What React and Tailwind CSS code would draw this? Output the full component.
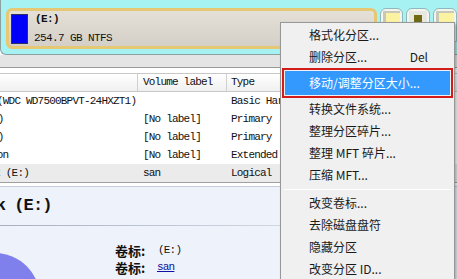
import React from 'react';

const mono = { fontFamily: '"Liberation Mono", "DejaVu Sans Mono", monospace' };
const cjk = { fontFamily: '"Noto Sans CJK SC", "Noto Sans", sans-serif' };

const rows = [
    { name: '(WDC WD7500BPVT-24HXZT1)', label: '', type: 'Basic Hard Disk', indent: '-ml-[3px]' },
    { name: 'Primary (C:)', label: '[No label]', type: 'Primary', indent: '-ml-[66px]' },
    { name: 'Primary (D:)', label: '[No label]', type: 'Primary', indent: '-ml-[66px]' },
    { name: 'Extended Partition', label: '[No label]', type: 'Extended', indent: '-ml-[96px]' },
    { name: 'Local Disk (E:)', label: 'san', type: 'Logical', indent: '-ml-[58px]', selected: true },
];

const menu = [
    { text: '格式化分区...' },
    { text: '删除分区...', key: 'Del' },
    { text: '移动/调整分区大小...', active: true },
    { text: '转换文件系统...' },
    { text: '整理分区碎片...' },
    { text: '整理 MFT 碎片...' },
    { text: '压缩 MFT...' },
    { sep: true },
    { text: '改变卷标...' },
    { text: '去除磁盘盘符' },
    { text: '隐藏分区' },
    { text: '改变分区 ID...' },
];

function MiniBox({ children }) {
    return (
        <div className="w-[24px] h-[34px] rounded-t-[6px] border border-[#8fb8b8] bg-[#f4f4f0] p-[2px] flex flex-col">
            {children}
        </div>
    );
}

export default function App() {
    return (
        <div className="relative w-[457px] h-[279px] overflow-hidden bg-white text-[#111]" style={mono}>
            {/* disk map strip */}
            <div className="h-[55px] bg-[#a6f1f1] border-b border-l border-[#8ca0a0] rounded-bl-[6px] flex items-start gap-[3px] pl-[5px] pt-[8px]">
                <div className="w-[374px] h-[41px] rounded-[6px] border-[3px] border-[#e6c773] bg-gradient-to-b from-[#e4e0d8] to-[#d4d0c8] flex items-center gap-[6px] pl-[2px]">
                    <div className="w-[17px] h-[30px] bg-[#0000f8] border border-[#303060]" />
                    <div className="flex flex-col leading-none text-[11px] tracking-[-0.6px] gap-[8px]">
                        <span className="font-bold pl-[1px]">(E:)</span>
                        <span>254.7 GB NTFS</span>
                    </div>
                </div>
                <MiniBox>
                    <div className="flex-1 bg-[#fbf3a2] border-l-[3px] border-t-[2px] border-[#c8c8b8]" />
                </MiniBox>
                <MiniBox>
                    <div className="flex-1 bg-[#e8e8e0] flex justify-center pt-[4px]">
                        <div className="w-[8px] h-[8px] bg-[#6f6a12]" />
                    </div>
                </MiniBox>
                <MiniBox>
                    <div className="flex-1 bg-[#fbf3a2] border-l-[3px] border-t-[2px] border-[#c8c8b8]" />
                </MiniBox>
            </div>
            <div className="h-[13px] bg-[#e4e4e4] border-b border-[#9a9a9a]" />
            <div className="h-[5px]" />

            {/* table header */}
            <div className="h-[19px] flex border-y border-[#c8c8c8] bg-gradient-to-b from-white to-[#f0f0f0] text-[11px] tracking-[-0.8px] items-center">
                <div className="w-[138px] h-full border-r border-[#d0d0d0]" />
                <div className="w-[89px] h-full border-r border-[#d0d0d0] flex items-center pl-[5px]">Volume label</div>
                <div className="flex-1 pl-[4px]">Type</div>
            </div>

            {/* table rows */}
            <div className="flex flex-col">
                {rows.map((r, i) => (
                    <div key={i} className={`h-[18px] flex items-center text-[11px] tracking-[-0.8px] whitespace-nowrap ${r.selected ? 'bg-[#ebebeb]' : ''}`}>
                        <div className="w-[138px] overflow-hidden">
                            <span className={`block ${r.indent}`}>{r.name}</span>
                        </div>
                        <div className="w-[89px] pl-[5px]">{r.label}</div>
                        <div className="flex-1 pl-[4px]">{r.type}</div>
                    </div>
                ))}
            </div>
            <div className="h-[4px] border-t border-[#a0a0a0]" />

            {/* properties panel */}
            <div className="relative h-[100px] bg-[#eef2fa] border-t border-[#c4ccd8] overflow-hidden">
                <div className="h-[38px] flex items-center overflow-hidden whitespace-nowrap">
                    <span className="-ml-[88px] font-bold text-[17px] tracking-[-0.9px]">Local Disk (E:)</span>
                </div>
                <div className="h-px bg-gradient-to-r from-[#a8b0c0] via-[#c8d0dc] to-[#eef2fa]" />
                <div className="absolute -left-[50px] top-[66px] w-[90px] h-[90px] rounded-full bg-[#8080ec]" />
                <div className="pl-[115px] pt-[16px] flex flex-col text-[12px]">
                    <div className="h-[17px] flex items-center">
                        <span className="font-bold w-[43px] text-[13px] leading-[17px]" style={cjk}>卷标:</span>
                        <span className="tracking-[-0.8px] text-[11px] leading-[17px]">(E:)</span>
                    </div>
                    <div className="h-[17px] flex items-center">
                        <span className="font-bold w-[42px] text-[13px] leading-[17px]" style={cjk}>卷标:</span>
                        <span className="tracking-[-0.8px] text-[11px] leading-[17px] text-[#1010a0] underline">san</span>
                    </div>
                </div>
            </div>

            {/* context menu */}
            <div className="absolute left-[280px] top-[22px] w-[175px] h-[270px] bg-[#f0f0f0] border border-[#979797] shadow-[2px_2px_3px_rgba(0,0,0,0.3)] pt-[1px] px-[1px] text-[12px] text-[#1a1a1a]" style={cjk}>
                {menu.map((m, i) =>
                    m.sep ? (
                        <div key={i} className="h-[6px] flex items-center px-[2px]">
                            <div className="h-px w-full bg-[#c4c4c4] border-b border-white" />
                        </div>
                    ) : m.active ? (
                        <div key={i} className="h-[30px] border-2 border-[#d21c1c] p-px">
                            <div className="h-full bg-[#3399ff] text-white flex items-center pl-[24px]">{m.text}</div>
                        </div>
                    ) : (
                        <div key={i} className="h-[22px] flex items-center pl-[27px] pr-[25px] justify-between">
                            <span>{m.text}</span>
                            {m.key && <span>{m.key}</span>}
                        </div>
                    )
                )}
            </div>
        </div>
    );
}
